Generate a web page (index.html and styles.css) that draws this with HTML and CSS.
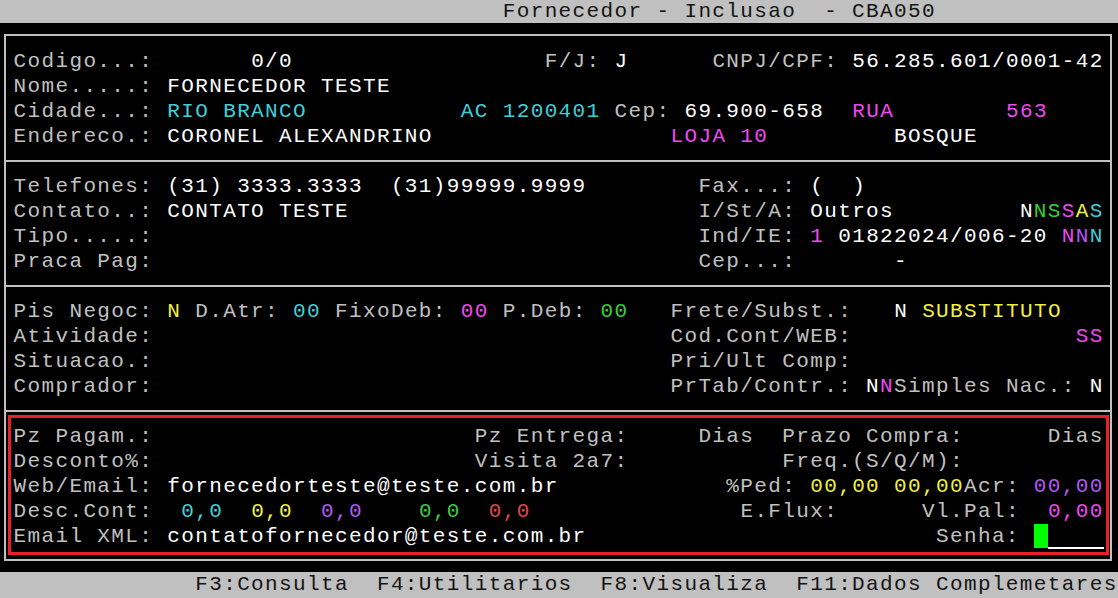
FILE: index.html
```html
<!DOCTYPE html>
<html lang="pt">

<head>
  <meta charset="UTF-8">
  <meta name="viewport" content="width=device-width, initial-scale=1.0">
  <title>Fornecedor - Inclusao - CBA050</title>
  <link rel="stylesheet" href="styles.css">
</head>

<body>
  <div class="bar title">                                   Fornecedor - Inclusao  - CBA050</div>

  <div class="frame">
    <section class="block">
      <div class="row">Codigo...:       <span class="w">0/0</span>                  F/J: <span class="w">J</span>      CNPJ/CPF: <span class="w">56.285.601/0001-42</span></div>
      <div class="row">Nome.....: <span class="w">FORNECEDOR TESTE</span></div>
      <div class="row">Cidade...: <span class="c">RIO BRANCO</span>           <span class="c">AC 1200401</span> Cep: <span class="w">69.900-658</span>  <span class="m">RUA</span>        <span class="m">563</span></div>
      <div class="row">Endereco.: <span class="w">CORONEL ALEXANDRINO</span>                 <span class="m">LOJA 10</span>         <span class="w">BOSQUE</span></div>
    </section>

    <section class="block">
      <div class="row">Telefones: <span class="w">(31) 3333.3333  (31)99999.9999</span>        Fax...: <span class="w">(  )</span></div>
      <div class="row">Contato..: <span class="w">CONTATO TESTE</span>                         I/St/A: <span class="w">Outros</span>         <span class="w">N</span><span class="g">NS</span><span class="m">S</span><span class="y">A</span><span class="c">S</span></div>
      <div class="row">Tipo.....:                                       Ind/IE: <span class="m">1</span> <span class="w">01822024/006-20</span> <span class="m">N</span><span class="p">N</span><span class="c">N</span></div>
      <div class="row">Praca Pag:                                       Cep...:       <span class="w">-</span></div>
    </section>

    <section class="block">
      <div class="row">Pis Negoc: <span class="y">N</span> D.Atr: <span class="c">00</span> FixoDeb: <span class="m">00</span> P.Deb: <span class="g">00</span>   Frete/Subst.:   <span class="w">N</span> <span class="y">SUBSTITUTO</span></div>
      <div class="row">Atividade:                                     Cod.Cont/WEB:                <span class="m">SS</span></div>
      <div class="row">Situacao.:                                     Pri/Ult Comp:</div>
      <div class="row">Comprador:                                     PrTab/Contr.: <span class="w">N</span><span class="m">N</span>Simples Nac.: <span class="w">N</span></div>
    </section>

    <section class="block last">
      <div class="mark">
        <div class="row">Pz Pagam.:                       Pz Entrega:     Dias  Prazo Compra:      Dias</div>
        <div class="row">Desconto%:                       Visita 2a7:           Freq.(S/Q/M):</div>
        <div class="row">Web/Email: <span class="w">fornecedorteste@teste.com.br</span>            %Ped: <span class="y">00,00</span> <span class="y">00,00</span>Acr: <span class="p">00,00</span></div>
        <div class="row">Desc.Cont:  <span class="c">0,0</span>  <span class="y">0,0</span>  <span class="p">0,0</span>    <span class="g">0,0</span>  <span class="r">0,0</span>               E.Flux:      Vl.Pal:  <span class="m">0,00</span></div>
        <div class="row">Email XML: <span class="w">contatofornecedor@teste.com.br</span>                         Senha: <span class="cursor"> </span><span class="field">    </span></div>
      </div>
    </section>
  </div>

  <div class="bar keys">             F3:Consulta  F4:Utilitarios  F8:Visualiza  F11:Dados Complemetares</div>
</body>

</html>
```

FILE: styles.css
```css
body {
  margin: 0;
  background: #000;
  color: #c0c0c0;
  font-family: "Liberation Mono", "DejaVu Sans Mono", monospace;
  font-size: 21px;
  letter-spacing: 1.375px;
}

.bar {
  background: #c0c0c0;
  color: #141414;
  padding-left: 13.5px;
  white-space: pre;
}

.title {
  height: 23px;
  line-height: 23px;
}

.keys {
  margin-top: 11px;
  height: 26px;
  line-height: 26px;
}

.frame {
  margin: 11px 6px 0 4px;
  border: 2px solid #c0c0c0;
}

.block {
  padding: 12.5px 0 11.5px 7.5px;
}

.block+.block {
  border-top: 2px solid #c0c0c0;
  padding-top: 11.5px;
}

.block.last {
  padding: 3px 1px 4px 2px;
}

.mark {
  border: 3px solid #e8202a;
  padding: 5.5px 0 3.5px 2.5px;
}

.row {
  height: 25px;
  line-height: 25px;
  white-space: pre;
}

.w {
  color: #fff;
}

.c {
  color: #3fcfdc;
}

.m {
  color: #f048f0;
}

.p {
  color: #b458f4;
}

.y {
  color: #f0f040;
}

.g {
  color: #38d038;
}

.r {
  color: #e04848;
}

.cursor {
  display: inline-block;
  height: 24px;
  background: #00ff00;
  vertical-align: top;
}

.field {
  display: inline-block;
  height: 23px;
  border-bottom: 2px solid #fff;
  vertical-align: top;
}
```
